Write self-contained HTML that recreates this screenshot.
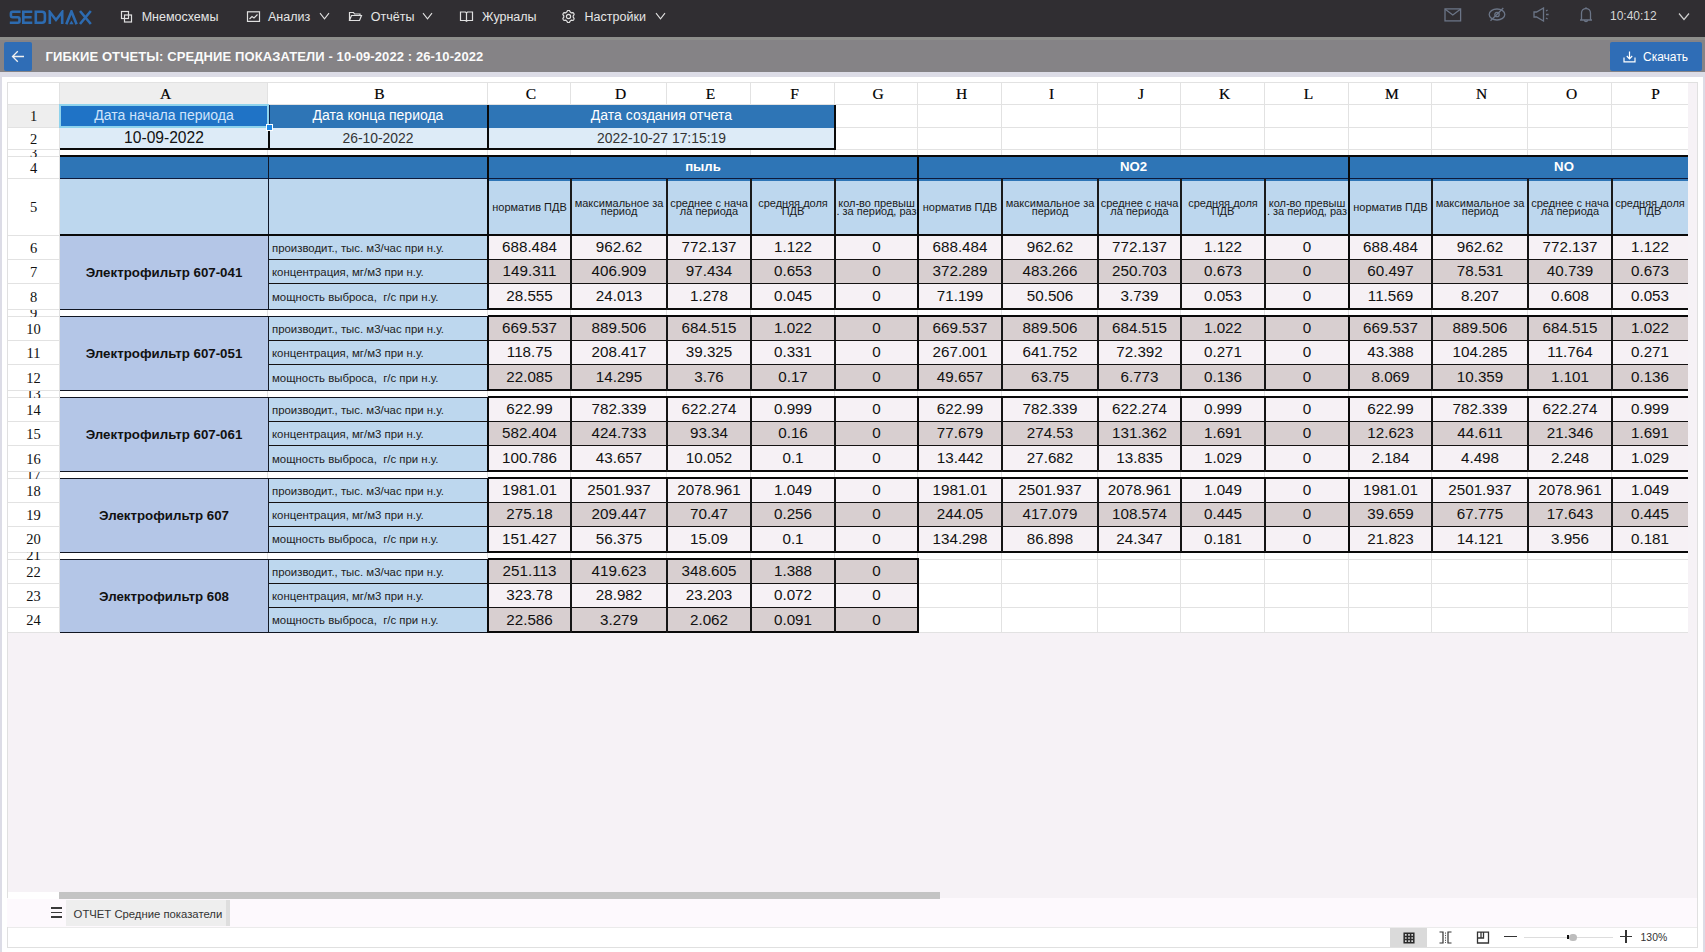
<!DOCTYPE html><html><head><meta charset="utf-8"><style>
*{margin:0;padding:0;box-sizing:border-box}
html,body{width:1705px;height:952px;overflow:hidden}
body{position:relative;background:#dcdce6;font-family:"Liberation Sans",sans-serif}
div{position:absolute}
.sf{font-family:'Liberation Serif',serif}
.t{white-space:nowrap;text-align:center;overflow:visible}
.n{font-size:15.2px;color:#111}
.lbl{font-size:11.4px;color:#222;text-align:left}
.hdc{display:flex;align-items:center;justify-content:center;text-align:center;overflow:hidden;white-space:nowrap}
.hdc span{position:static;font-size:11px;color:#1a1a1a;line-height:8px}
</style></head><body>
<div style="left:0px;top:0px;width:1705px;height:37px;background:#302e32;"></div>
<div style="left:0px;top:37px;width:1705px;height:3px;background:#8d8e8b;"></div>
<div style="left:0px;top:40px;width:1705px;height:32px;background:#858386;"></div>
<div style="left:0px;top:72px;width:1705px;height:5px;background:#dcdce6;"></div>
<div style="left:2px;top:77px;width:1701px;height:875px;background:#ffffff;"></div>
<div style="left:7px;top:82px;width:1691px;height:866px;background:#ffffff;border:1px solid #e0e0e0"></div>
<div style="left:8px;top:633px;width:1689px;height:266px;background:#f6f2f6;"></div>
<div style="left:1688px;top:83px;width:9px;height:550px;background:#f6f2f6;"></div>
<div style="left:8px;top:83px;width:1680px;height:21px;background:#ffffff;"></div>
<div style="left:60px;top:83px;width:208px;height:21px;background:#eeeeee;"></div>
<div style="left:8px;top:104px;width:51px;height:23px;background:#eeeeee;"></div>
<div style="left:59px;top:83px;width:1px;height:550px;background:#e2e2e2;"></div>
<div style="left:267px;top:83px;width:1px;height:550px;background:#e2e2e2;"></div>
<div style="left:487px;top:83px;width:1px;height:550px;background:#e2e2e2;"></div>
<div style="left:570px;top:83px;width:1px;height:550px;background:#e2e2e2;"></div>
<div style="left:666px;top:83px;width:1px;height:550px;background:#e2e2e2;"></div>
<div style="left:750px;top:83px;width:1px;height:550px;background:#e2e2e2;"></div>
<div style="left:834px;top:83px;width:1px;height:550px;background:#e2e2e2;"></div>
<div style="left:917px;top:83px;width:1px;height:550px;background:#e2e2e2;"></div>
<div style="left:1001px;top:83px;width:1px;height:550px;background:#e2e2e2;"></div>
<div style="left:1097px;top:83px;width:1px;height:550px;background:#e2e2e2;"></div>
<div style="left:1180px;top:83px;width:1px;height:550px;background:#e2e2e2;"></div>
<div style="left:1264px;top:83px;width:1px;height:550px;background:#e2e2e2;"></div>
<div style="left:1348px;top:83px;width:1px;height:550px;background:#e2e2e2;"></div>
<div style="left:1431px;top:83px;width:1px;height:550px;background:#e2e2e2;"></div>
<div style="left:1527px;top:83px;width:1px;height:550px;background:#e2e2e2;"></div>
<div style="left:1611px;top:83px;width:1px;height:550px;background:#e2e2e2;"></div>
<div style="left:8px;top:82px;width:1680px;height:1px;background:#e2e2e2;"></div>
<div style="left:8px;top:104px;width:1680px;height:1px;background:#e2e2e2;"></div>
<div style="left:8px;top:127px;width:1680px;height:1px;background:#e2e2e2;"></div>
<div style="left:8px;top:149px;width:1680px;height:1px;background:#e2e2e2;"></div>
<div style="left:8px;top:156px;width:1680px;height:1px;background:#e2e2e2;"></div>
<div style="left:8px;top:178px;width:1680px;height:1px;background:#e2e2e2;"></div>
<div style="left:8px;top:235px;width:1680px;height:1px;background:#e2e2e2;"></div>
<div style="left:8px;top:259px;width:1680px;height:1px;background:#e2e2e2;"></div>
<div style="left:8px;top:283px;width:1680px;height:1px;background:#e2e2e2;"></div>
<div style="left:8px;top:309px;width:1680px;height:1px;background:#e2e2e2;"></div>
<div style="left:8px;top:316px;width:1680px;height:1px;background:#e2e2e2;"></div>
<div style="left:8px;top:340px;width:1680px;height:1px;background:#e2e2e2;"></div>
<div style="left:8px;top:364px;width:1680px;height:1px;background:#e2e2e2;"></div>
<div style="left:8px;top:390px;width:1680px;height:1px;background:#e2e2e2;"></div>
<div style="left:8px;top:397px;width:1680px;height:1px;background:#e2e2e2;"></div>
<div style="left:8px;top:421px;width:1680px;height:1px;background:#e2e2e2;"></div>
<div style="left:8px;top:445px;width:1680px;height:1px;background:#e2e2e2;"></div>
<div style="left:8px;top:471px;width:1680px;height:1px;background:#e2e2e2;"></div>
<div style="left:8px;top:478px;width:1680px;height:1px;background:#e2e2e2;"></div>
<div style="left:8px;top:502px;width:1680px;height:1px;background:#e2e2e2;"></div>
<div style="left:8px;top:526px;width:1680px;height:1px;background:#e2e2e2;"></div>
<div style="left:8px;top:552px;width:1680px;height:1px;background:#e2e2e2;"></div>
<div style="left:8px;top:559px;width:1680px;height:1px;background:#e2e2e2;"></div>
<div style="left:8px;top:583px;width:1680px;height:1px;background:#e2e2e2;"></div>
<div style="left:8px;top:607px;width:1680px;height:1px;background:#e2e2e2;"></div>
<div style="left:8px;top:632px;width:1680px;height:1px;background:#e2e2e2;"></div>
<div class="t sf" style="left:61.5px;top:83px;width:208px;height:21px;line-height:21px;font-size:15.5px;color:#000;-webkit-text-stroke:0.2px #000">A</div>
<div class="t sf" style="left:269.5px;top:83px;width:220px;height:21px;line-height:21px;font-size:15.5px;color:#000;-webkit-text-stroke:0.2px #000">B</div>
<div class="t sf" style="left:489.5px;top:83px;width:83px;height:21px;line-height:21px;font-size:15.5px;color:#000;-webkit-text-stroke:0.2px #000">C</div>
<div class="t sf" style="left:572.5px;top:83px;width:96px;height:21px;line-height:21px;font-size:15.5px;color:#000;-webkit-text-stroke:0.2px #000">D</div>
<div class="t sf" style="left:668.5px;top:83px;width:84px;height:21px;line-height:21px;font-size:15.5px;color:#000;-webkit-text-stroke:0.2px #000">E</div>
<div class="t sf" style="left:752.5px;top:83px;width:84px;height:21px;line-height:21px;font-size:15.5px;color:#000;-webkit-text-stroke:0.2px #000">F</div>
<div class="t sf" style="left:836.5px;top:83px;width:83px;height:21px;line-height:21px;font-size:15.5px;color:#000;-webkit-text-stroke:0.2px #000">G</div>
<div class="t sf" style="left:919.5px;top:83px;width:84px;height:21px;line-height:21px;font-size:15.5px;color:#000;-webkit-text-stroke:0.2px #000">H</div>
<div class="t sf" style="left:1003.5px;top:83px;width:96px;height:21px;line-height:21px;font-size:15.5px;color:#000;-webkit-text-stroke:0.2px #000">I</div>
<div class="t sf" style="left:1099.5px;top:83px;width:83px;height:21px;line-height:21px;font-size:15.5px;color:#000;-webkit-text-stroke:0.2px #000">J</div>
<div class="t sf" style="left:1182.5px;top:83px;width:84px;height:21px;line-height:21px;font-size:15.5px;color:#000;-webkit-text-stroke:0.2px #000">K</div>
<div class="t sf" style="left:1266.5px;top:83px;width:84px;height:21px;line-height:21px;font-size:15.5px;color:#000;-webkit-text-stroke:0.2px #000">L</div>
<div class="t sf" style="left:1350.5px;top:83px;width:83px;height:21px;line-height:21px;font-size:15.5px;color:#000;-webkit-text-stroke:0.2px #000">M</div>
<div class="t sf" style="left:1433.5px;top:83px;width:96px;height:21px;line-height:21px;font-size:15.5px;color:#000;-webkit-text-stroke:0.2px #000">N</div>
<div class="t sf" style="left:1529.5px;top:83px;width:84px;height:21px;line-height:21px;font-size:15.5px;color:#000;-webkit-text-stroke:0.2px #000">O</div>
<div class="t sf" style="left:1613.5px;top:83px;width:84px;height:21px;line-height:21px;font-size:15.5px;color:#000;-webkit-text-stroke:0.2px #000">P</div>
<div class="t sf" style="left:8px;top:104.5px;width:51px;height:23.0px;line-height:23.0px;font-size:14.5px;color:#111;overflow:hidden">1</div>
<div class="t sf" style="left:8px;top:127.5px;width:51px;height:22.0px;line-height:22.0px;font-size:14.5px;color:#111;overflow:hidden">2</div>
<div class="t sf" style="left:8px;top:149.5px;width:51px;height:7.0px;line-height:7.0px;font-size:14.5px;color:#111;overflow:hidden">3</div>
<div class="t sf" style="left:8px;top:156.5px;width:51px;height:22.0px;line-height:22.0px;font-size:14.5px;color:#111;overflow:hidden">4</div>
<div class="t sf" style="left:8px;top:178.5px;width:51px;height:57.0px;line-height:57.0px;font-size:14.5px;color:#111;overflow:hidden">5</div>
<div class="t sf" style="left:8px;top:235.5px;width:51px;height:24.0px;line-height:24.0px;font-size:14.5px;color:#111;overflow:hidden">6</div>
<div class="t sf" style="left:8px;top:259.5px;width:51px;height:24.0px;line-height:24.0px;font-size:14.5px;color:#111;overflow:hidden">7</div>
<div class="t sf" style="left:8px;top:283.5px;width:51px;height:26.0px;line-height:26.0px;font-size:14.5px;color:#111;overflow:hidden">8</div>
<div class="t sf" style="left:8px;top:309.5px;width:51px;height:7.0px;line-height:7.0px;font-size:14.5px;color:#111;overflow:hidden">9</div>
<div class="t sf" style="left:8px;top:316.5px;width:51px;height:24.0px;line-height:24.0px;font-size:14.5px;color:#111;overflow:hidden">10</div>
<div class="t sf" style="left:8px;top:340.5px;width:51px;height:24.0px;line-height:24.0px;font-size:14.5px;color:#111;overflow:hidden">11</div>
<div class="t sf" style="left:8px;top:364.5px;width:51px;height:26.0px;line-height:26.0px;font-size:14.5px;color:#111;overflow:hidden">12</div>
<div class="t sf" style="left:8px;top:390.5px;width:51px;height:7.0px;line-height:7.0px;font-size:14.5px;color:#111;overflow:hidden">13</div>
<div class="t sf" style="left:8px;top:397.5px;width:51px;height:24.0px;line-height:24.0px;font-size:14.5px;color:#111;overflow:hidden">14</div>
<div class="t sf" style="left:8px;top:421.5px;width:51px;height:24.0px;line-height:24.0px;font-size:14.5px;color:#111;overflow:hidden">15</div>
<div class="t sf" style="left:8px;top:445.5px;width:51px;height:26.0px;line-height:26.0px;font-size:14.5px;color:#111;overflow:hidden">16</div>
<div class="t sf" style="left:8px;top:471.5px;width:51px;height:7.0px;line-height:7.0px;font-size:14.5px;color:#111;overflow:hidden">17</div>
<div class="t sf" style="left:8px;top:478.5px;width:51px;height:24.0px;line-height:24.0px;font-size:14.5px;color:#111;overflow:hidden">18</div>
<div class="t sf" style="left:8px;top:502.5px;width:51px;height:24.0px;line-height:24.0px;font-size:14.5px;color:#111;overflow:hidden">19</div>
<div class="t sf" style="left:8px;top:526.5px;width:51px;height:25.5px;line-height:25.5px;font-size:14.5px;color:#111;overflow:hidden">20</div>
<div class="t sf" style="left:8px;top:552px;width:51px;height:7.5px;line-height:7.5px;font-size:14.5px;color:#111;overflow:hidden">21</div>
<div class="t sf" style="left:8px;top:559.5px;width:51px;height:24.0px;line-height:24.0px;font-size:14.5px;color:#111;overflow:hidden">22</div>
<div class="t sf" style="left:8px;top:583.5px;width:51px;height:24.0px;line-height:24.0px;font-size:14.5px;color:#111;overflow:hidden">23</div>
<div class="t sf" style="left:8px;top:607.5px;width:51px;height:25.0px;line-height:25.0px;font-size:14.5px;color:#111;overflow:hidden">24</div>
<svg style="position:absolute;left:9px;top:9.5px;" width="84" height="15" viewBox="0 0 84 15"><path d="M11.6 1.7 H3.6 Q1.9 1.7 1.9 3.4 V5.5 Q1.9 7.2 3.6 7.2 H8.8 Q10.5 7.2 10.5 8.9 V11 Q10.5 12.7 8.8 12.7 H0.8" fill="none" stroke="#2d6bb0" stroke-width="2.6" stroke-linejoin="miter"/><path d="M23.3 1.7 H14.3 V12.7 H23.3 M14.3 7.2 H22.6" fill="none" stroke="#2d6bb0" stroke-width="2.6" stroke-linejoin="miter"/><path d="M26.8 1.7 H33 Q35.9 1.7 35.9 4.6 V9.8 Q35.9 12.7 33 12.7 H26.8 Z" fill="none" stroke="#2d6bb0" stroke-width="2.6" stroke-linejoin="miter"/><path d="M40.8 14 V2 L47 10 L53.2 2 V14" fill="none" stroke="#2d6bb0" stroke-width="2.6" stroke-linejoin="miter"/><path d="M57.3 14.2 L62.45 1.4 L67.6 14.2" fill="none" stroke="#2d6bb0" stroke-width="2.6" stroke-linejoin="miter"/><polygon points="60.3,14.2 62.45,10.6 64.6,14.2" fill="#2d6bb0"/><path d="M71 1 L81.8 14 M81.8 1 L71 14" fill="none" stroke="#2d6bb0" stroke-width="2.6" stroke-linejoin="miter"/></svg>
<div class="t" style="left:141.7px;top:9.98px;text-align:left;font-size:12.5px;line-height:14.37px;color:#e6e6e6">Мнемосхемы</div>
<div class="t" style="left:268px;top:9.98px;text-align:left;font-size:12.5px;line-height:14.37px;color:#e6e6e6">Анализ</div>
<div class="t" style="left:370.8px;top:9.98px;text-align:left;font-size:12.5px;line-height:14.37px;color:#e6e6e6">Отчёты</div>
<div class="t" style="left:482px;top:9.98px;text-align:left;font-size:12.5px;line-height:14.37px;color:#e6e6e6">Журналы</div>
<div class="t" style="left:584.6px;top:9.98px;text-align:left;font-size:12.5px;line-height:14.37px;color:#e6e6e6">Настройки</div>
<svg style="position:absolute;left:120px;top:10px;" width="13" height="13" viewBox="0 0 13 13"><rect x="1.5" y="1.5" width="7" height="7" fill="none" stroke="#e0e0e0" stroke-width="1.2"/><rect x="4.5" y="5" width="7" height="7" fill="none" stroke="#e0e0e0" stroke-width="1.2"/></svg>
<svg style="position:absolute;left:246px;top:10px;" width="15" height="13" viewBox="0 0 15 13"><rect x="1.5" y="1.8" width="12" height="9.6" fill="none" stroke="#e0e0e0" stroke-width="1.2"/><path d="M3.5 9 L6 6.5 L8 8 L11.5 4.5" fill="none" stroke="#e0e0e0" stroke-width="1.2"/></svg>
<svg style="position:absolute;left:348px;top:11px;" width="15" height="11" viewBox="0 0 15 11"><path d="M1.5 9.5 V1.5 H5.5 L6.5 3 H12 V4.5 M1.5 9.5 L3.5 4.5 H13.5 L11.5 9.5 Z" fill="none" stroke="#e0e0e0" stroke-width="1.2"/></svg>
<svg style="position:absolute;left:459px;top:10px;" width="15" height="13" viewBox="0 0 15 13"><path d="M1.5 2 H6.5 L7.5 3 L8.5 2 H13.5 V10.5 H8.5 L7.5 11.3 L6.5 10.5 H1.5 Z M7.5 3 V10.5" fill="none" stroke="#e0e0e0" stroke-width="1.2"/></svg>
<svg style="position:absolute;left:562.2px;top:9.7px;" width="13" height="13" viewBox="0 0 13 13"><polygon points="11.78,9.55 11.34,10.21 10.32,10.32 9.36,10.23 8.85,10.57 8.30,10.84 7.90,11.72 7.30,12.55 6.50,12.60 5.70,12.55 5.10,11.72 4.70,10.84 4.15,10.57 3.64,10.23 2.68,10.32 1.66,10.21 1.22,9.55 0.86,8.83 1.28,7.90 1.84,7.11 1.80,6.50 1.84,5.89 1.28,5.10 0.86,4.17 1.22,3.45 1.66,2.79 2.68,2.68 3.64,2.77 4.15,2.43 4.70,2.16 5.10,1.28 5.70,0.45 6.50,0.40 7.30,0.45 7.90,1.28 8.30,2.16 8.85,2.43 9.36,2.77 10.32,2.68 11.34,2.79 11.78,3.45 12.14,4.17 11.72,5.10 11.16,5.89 11.20,6.50 11.16,7.11 11.72,7.90 12.14,8.83" fill="none" stroke="#e0e0e0" stroke-width="1.2"/><circle cx="6.5" cy="6.5" r="2.1" fill="none" stroke="#e0e0e0" stroke-width="1.2"/></svg>
<svg style="position:absolute;left:319.2px;top:12px;" width="11" height="8" viewBox="0 0 11 8"><path d="M1 1.2 L5.5 6.8 L10 1.2" fill="none" stroke="#e0e0e0" stroke-width="1.1"/></svg>
<svg style="position:absolute;left:422.0px;top:12px;" width="11" height="8" viewBox="0 0 11 8"><path d="M1 1.2 L5.5 6.8 L10 1.2" fill="none" stroke="#e0e0e0" stroke-width="1.1"/></svg>
<svg style="position:absolute;left:655.1px;top:12px;" width="11" height="8" viewBox="0 0 11 8"><path d="M1 1.2 L5.5 6.8 L10 1.2" fill="none" stroke="#e0e0e0" stroke-width="1.1"/></svg>
<svg style="position:absolute;left:1444px;top:8px;" width="18" height="14" viewBox="0 0 18 14"><rect x="1" y="0.9" width="15.6" height="12" fill="none" stroke="#6b7587" stroke-width="1.3"/><path d="M1.2 1.2 L8.8 7 L16.4 1.2" fill="none" stroke="#6b7587" stroke-width="1.3"/></svg>
<svg style="position:absolute;left:1488px;top:7px;" width="18" height="15" viewBox="0 0 18 15"><ellipse cx="9" cy="7.5" rx="7.8" ry="5.5" fill="none" stroke="#6b7587" stroke-width="1.3"/><circle cx="9" cy="7.5" r="2.2" fill="none" stroke="#6b7587" stroke-width="1.3"/><path d="M2.5 13.8 L15.3 1" fill="none" stroke="#6b7587" stroke-width="1.3"/></svg>
<svg style="position:absolute;left:1533px;top:7px;" width="17" height="15" viewBox="0 0 17 15"><path d="M1 5 H3.5 L10.5 1 V14 L3.5 10 H1 Z" fill="none" stroke="#6b7587" stroke-width="1.3"/><path d="M13 4 L14.6 3 M13 7.5 H15.6 M13 11 L14.6 12" fill="none" stroke="#6b7587" stroke-width="1.3"/></svg>
<svg style="position:absolute;left:1579px;top:6px;" width="14" height="17" viewBox="0 0 14 17"><path d="M2.5 14 V7 A4.5 4.5 0 0 1 11.5 7 V14 M1 14 H13 M5.5 14.2 A1.5 1.5 0 0 0 8.5 14.2 M7 1.2 V2.6" fill="none" stroke="#6b7587" stroke-width="1.3"/></svg>
<div class="t" style="left:1610px;top:9.84px;text-align:left;font-size:12px;line-height:13.8px;color:#d6d6d6">10:40:12</div>
<svg style="position:absolute;left:1677.5px;top:12px;" width="12" height="9" viewBox="0 0 12 9"><path d="M1 1.5 L6 7.5 L11 1.5" fill="none" stroke="#d0d0d0" stroke-width="1.2"/></svg>
<div style="left:3.6px;top:42px;width:28px;height:28.6px;background:#2f6db6;border-radius:2px"></div>
<svg style="position:absolute;left:11px;top:50px;" width="14" height="13" viewBox="0 0 14 13"><path d="M13 6.5 H1.8 M6.8 1.2 L1.5 6.5 L6.8 11.8" fill="none" stroke="#f0f0f0" stroke-width="1.3"/></svg>
<div class="t" style="left:45.6px;top:49.52px;text-align:left;font-size:13px;line-height:14.95px;font-weight:bold;color:#fbfbfb;letter-spacing:0.1px">ГИБКИЕ ОТЧЕТЫ: СРЕДНИЕ ПОКАЗАТЕЛИ - 10-09-2022 : 26-10-2022</div>
<div style="left:1609.5px;top:42.3px;width:92.3px;height:28.5px;background:#2f6db6;border-radius:2px"></div>
<svg style="position:absolute;left:1623px;top:51px;" width="13" height="12" viewBox="0 0 13 12"><path d="M6.5 0.5 V7.5 M3.8 5 L6.5 7.8 L9.2 5 M1 6.5 V10.8 H12 V6.5" fill="none" stroke="#ffffff" stroke-width="1.2"/></svg>
<div class="t" style="left:1643px;top:50.94px;text-align:left;font-size:12px;line-height:13.8px;color:#ffffff">Скачать</div>
<div style="left:7px;top:898px;width:1690px;height:29px;background:#fdf9fd;"></div>
<div style="left:8px;top:892px;width:51px;height:7px;background:#ffffff;"></div>
<div style="left:59.3px;top:892px;width:880.7px;height:7px;background:#c4c4c4;"></div>
<div style="left:8px;top:926.5px;width:1689px;height:1.5px;background:#ebebeb;"></div>
<div style="left:66px;top:900px;width:163.7px;height:26px;background:#eeeeee;"></div>
<div style="left:225.5px;top:900px;width:4.2px;height:26px;background:#dedede;"></div>
<div class="t" style="left:73.6px;top:908.39px;text-align:left;font-size:11.3px;line-height:12.99px;color:#333">ОТЧЕТ Средние показатели</div>
<div style="left:50.5px;top:907px;width:11.2px;height:1.6px;background:#3a3a3a"></div><div style="left:50.5px;top:911.7px;width:11.2px;height:1.6px;background:#3a3a3a"></div><div style="left:50.5px;top:916.4px;width:11.2px;height:1.6px;background:#3a3a3a"></div>
<div style="left:1390px;top:927.5px;width:37px;height:19.5px;background:#dadada;"></div>
<svg style="position:absolute;left:1402.5px;top:931.5px;" width="12" height="12" viewBox="0 0 12 12"><path d="M1.2 1.2 H10.8 V10.8 H1.2 Z M1.2 4.4 H10.8 M1.2 7.6 H10.8 M4.4 1.2 V10.8 M7.6 1.2 V10.8" fill="none" stroke="#2a2a2a" stroke-width="1.5"/></svg>
<svg style="position:absolute;left:1439px;top:931px;" width="13" height="13" viewBox="0 0 13 13"><path d="M0.5 1 H4 V12 H0.5 M12.5 1 H9 V12 H12.5" fill="none" stroke="#333" stroke-width="1.2"/><path d="M6.5 1.5 V12" fill="none" stroke="#555" stroke-width="1" stroke-dasharray="1.2 1.2"/></svg>
<svg style="position:absolute;left:1476px;top:931px;" width="14" height="13" viewBox="0 0 14 13"><path d="M1.5 1.2 H12.5 V12 H1.5 Z M1.5 7 H7.5 V1.2 M5 1.2 V7" fill="none" stroke="#333" stroke-width="1.3"/></svg>
<div style="left:1504px;top:935.5px;width:12.7px;height:1.6px;background:#333;"></div>
<div style="left:1524px;top:936.5px;width:89px;height:1px;background:#dddddd;"></div>
<div style="left:1567.2px;top:935px;width:1.6px;height:4px;background:#111;"></div>
<div style="left:1569px;top:933.5px;width:7.5px;height:7.5px;border-radius:50%;background:#bdbdbd"></div>
<div style="left:1619.8px;top:935.5px;width:12.2px;height:1.6px;background:#333;"></div>
<div style="left:1625.1px;top:930px;width:1.6px;height:12.5px;background:#333;"></div>
<div class="t" style="left:1640.6px;top:931.62px;text-align:left;font-size:10.4px;line-height:11.96px;color:#333">130%</div>
<div style="left:60px;top:104.5px;width:208px;height:23.0px;background:#1f73c6;"></div>
<div style="left:268px;top:104.5px;width:220px;height:23.0px;background:#2e75b6;"></div>
<div style="left:488px;top:104.5px;width:347px;height:23.0px;background:#2e75b6;"></div>
<div style="left:60px;top:127.5px;width:775px;height:22.0px;background:#ddebf7;"></div>
<div style="left:60px;top:156.5px;width:1628px;height:22.0px;background:#2e75b6;"></div>
<div style="left:60px;top:178.5px;width:1628px;height:57.0px;background:#bdd7ee;"></div>
<div style="left:60px;top:235.5px;width:208px;height:74.0px;background:#b4c6e7;"></div>
<div style="left:268px;top:235.5px;width:220px;height:74.0px;background:#bdd7ee;"></div>
<div style="left:488px;top:235.5px;width:1200px;height:24.0px;background:#f6f1f5;"></div>
<div style="left:488px;top:259.5px;width:1200px;height:24.0px;background:#d8cfd0;"></div>
<div style="left:488px;top:283.5px;width:1200px;height:26.0px;background:#f6f1f5;"></div>
<div style="left:60px;top:316.5px;width:208px;height:74.0px;background:#b4c6e7;"></div>
<div style="left:268px;top:316.5px;width:220px;height:74.0px;background:#bdd7ee;"></div>
<div style="left:488px;top:316.5px;width:1200px;height:24.0px;background:#d8cfd0;"></div>
<div style="left:488px;top:340.5px;width:1200px;height:24.0px;background:#f6f1f5;"></div>
<div style="left:488px;top:364.5px;width:1200px;height:26.0px;background:#d8cfd0;"></div>
<div style="left:60px;top:397.5px;width:208px;height:74.0px;background:#b4c6e7;"></div>
<div style="left:268px;top:397.5px;width:220px;height:74.0px;background:#bdd7ee;"></div>
<div style="left:488px;top:397.5px;width:1200px;height:24.0px;background:#f6f1f5;"></div>
<div style="left:488px;top:421.5px;width:1200px;height:24.0px;background:#d8cfd0;"></div>
<div style="left:488px;top:445.5px;width:1200px;height:26.0px;background:#f6f1f5;"></div>
<div style="left:60px;top:478.5px;width:208px;height:73.5px;background:#b4c6e7;"></div>
<div style="left:268px;top:478.5px;width:220px;height:73.5px;background:#bdd7ee;"></div>
<div style="left:488px;top:478.5px;width:1200px;height:24.0px;background:#f6f1f5;"></div>
<div style="left:488px;top:502.5px;width:1200px;height:24.0px;background:#d8cfd0;"></div>
<div style="left:488px;top:526.5px;width:1200px;height:25.5px;background:#f6f1f5;"></div>
<div style="left:60px;top:559.5px;width:208px;height:73.0px;background:#b4c6e7;"></div>
<div style="left:268px;top:559.5px;width:220px;height:73.0px;background:#bdd7ee;"></div>
<div style="left:488px;top:559.5px;width:430px;height:24.0px;background:#d8cfd0;"></div>
<div style="left:488px;top:583.5px;width:430px;height:24.0px;background:#f6f1f5;"></div>
<div style="left:488px;top:607.5px;width:430px;height:25.0px;background:#d8cfd0;"></div>
<div style="left:268px;top:127px;width:2px;height:23px;background:#0a0a0a;"></div>
<div style="left:268px;top:104.5px;width:2px;height:22.5px;background:#0d2550;"></div>
<div style="left:487px;top:104.5px;width:2px;height:45.5px;background:#0a0a0a;"></div>
<div style="left:834px;top:104.5px;width:2px;height:45.5px;background:#0a0a0a;"></div>
<div style="left:60px;top:148px;width:776px;height:2px;background:#0a0a0a;"></div>
<div style="left:60px;top:155px;width:1628px;height:2px;background:#0a0a0a;"></div>
<div style="left:60px;top:178px;width:1628px;height:1px;background:#0e1a3a;"></div>
<div style="left:488px;top:179px;width:1200px;height:2px;background:#2e75b6;"></div>
<div style="left:268px;top:157px;width:1px;height:79px;background:#101828;"></div>
<div style="left:487px;top:157px;width:2px;height:79px;background:#0a0a0a;"></div>
<div style="left:917px;top:157px;width:2px;height:79px;background:#0a0a0a;"></div>
<div style="left:1348px;top:157px;width:2px;height:79px;background:#0a0a0a;"></div>
<div style="left:570px;top:179px;width:2px;height:57px;background:#1a1a1a;"></div>
<div style="left:666px;top:179px;width:2px;height:57px;background:#1a1a1a;"></div>
<div style="left:750px;top:179px;width:2px;height:57px;background:#1a1a1a;"></div>
<div style="left:834px;top:179px;width:2px;height:57px;background:#1a1a1a;"></div>
<div style="left:1001px;top:179px;width:2px;height:57px;background:#1a1a1a;"></div>
<div style="left:1097px;top:179px;width:2px;height:57px;background:#1a1a1a;"></div>
<div style="left:1180px;top:179px;width:2px;height:57px;background:#1a1a1a;"></div>
<div style="left:1264px;top:179px;width:2px;height:57px;background:#1a1a1a;"></div>
<div style="left:1431px;top:179px;width:2px;height:57px;background:#1a1a1a;"></div>
<div style="left:1527px;top:179px;width:2px;height:57px;background:#1a1a1a;"></div>
<div style="left:1611px;top:179px;width:2px;height:57px;background:#1a1a1a;"></div>
<div style="left:60px;top:234px;width:1628px;height:2px;background:#0a0a0a;"></div>
<div style="left:488px;top:308px;width:1200px;height:2px;background:#0a0a0a;"></div>
<div style="left:60px;top:309px;width:428px;height:1px;background:#111622;"></div>
<div style="left:268px;top:259px;width:1420px;height:1px;background:#141212;"></div>
<div style="left:268px;top:283px;width:1420px;height:1px;background:#141212;"></div>
<div style="left:268px;top:235.5px;width:1px;height:74.0px;background:#151a26;"></div>
<div style="left:570px;top:235.5px;width:2px;height:74.0px;background:#151515;"></div>
<div style="left:666px;top:235.5px;width:2px;height:74.0px;background:#151515;"></div>
<div style="left:750px;top:235.5px;width:2px;height:74.0px;background:#151515;"></div>
<div style="left:834px;top:235.5px;width:2px;height:74.0px;background:#151515;"></div>
<div style="left:1001px;top:235.5px;width:2px;height:74.0px;background:#151515;"></div>
<div style="left:1097px;top:235.5px;width:2px;height:74.0px;background:#151515;"></div>
<div style="left:1180px;top:235.5px;width:2px;height:74.0px;background:#151515;"></div>
<div style="left:1264px;top:235.5px;width:2px;height:74.0px;background:#151515;"></div>
<div style="left:1431px;top:235.5px;width:2px;height:74.0px;background:#151515;"></div>
<div style="left:1527px;top:235.5px;width:2px;height:74.0px;background:#151515;"></div>
<div style="left:1611px;top:235.5px;width:2px;height:74.0px;background:#151515;"></div>
<div style="left:487px;top:235.5px;width:2px;height:74.0px;background:#0a0a0a;"></div>
<div style="left:917px;top:235.5px;width:2px;height:74.0px;background:#0a0a0a;"></div>
<div style="left:1348px;top:235.5px;width:2px;height:74.0px;background:#0a0a0a;"></div>
<div style="left:488px;top:315px;width:1200px;height:2px;background:#0a0a0a;"></div>
<div style="left:60px;top:316px;width:428px;height:1px;background:#111622;"></div>
<div style="left:488px;top:389px;width:1200px;height:2px;background:#0a0a0a;"></div>
<div style="left:60px;top:390px;width:428px;height:1px;background:#111622;"></div>
<div style="left:268px;top:340px;width:1420px;height:1px;background:#141212;"></div>
<div style="left:268px;top:364px;width:1420px;height:1px;background:#141212;"></div>
<div style="left:268px;top:316.5px;width:1px;height:74.0px;background:#151a26;"></div>
<div style="left:570px;top:316.5px;width:2px;height:74.0px;background:#151515;"></div>
<div style="left:666px;top:316.5px;width:2px;height:74.0px;background:#151515;"></div>
<div style="left:750px;top:316.5px;width:2px;height:74.0px;background:#151515;"></div>
<div style="left:834px;top:316.5px;width:2px;height:74.0px;background:#151515;"></div>
<div style="left:1001px;top:316.5px;width:2px;height:74.0px;background:#151515;"></div>
<div style="left:1097px;top:316.5px;width:2px;height:74.0px;background:#151515;"></div>
<div style="left:1180px;top:316.5px;width:2px;height:74.0px;background:#151515;"></div>
<div style="left:1264px;top:316.5px;width:2px;height:74.0px;background:#151515;"></div>
<div style="left:1431px;top:316.5px;width:2px;height:74.0px;background:#151515;"></div>
<div style="left:1527px;top:316.5px;width:2px;height:74.0px;background:#151515;"></div>
<div style="left:1611px;top:316.5px;width:2px;height:74.0px;background:#151515;"></div>
<div style="left:487px;top:316.5px;width:2px;height:74.0px;background:#0a0a0a;"></div>
<div style="left:917px;top:316.5px;width:2px;height:74.0px;background:#0a0a0a;"></div>
<div style="left:1348px;top:316.5px;width:2px;height:74.0px;background:#0a0a0a;"></div>
<div style="left:488px;top:396px;width:1200px;height:2px;background:#0a0a0a;"></div>
<div style="left:60px;top:397px;width:428px;height:1px;background:#111622;"></div>
<div style="left:488px;top:470px;width:1200px;height:2px;background:#0a0a0a;"></div>
<div style="left:60px;top:471px;width:428px;height:1px;background:#111622;"></div>
<div style="left:268px;top:421px;width:1420px;height:1px;background:#141212;"></div>
<div style="left:268px;top:445px;width:1420px;height:1px;background:#141212;"></div>
<div style="left:268px;top:397.5px;width:1px;height:74.0px;background:#151a26;"></div>
<div style="left:570px;top:397.5px;width:2px;height:74.0px;background:#151515;"></div>
<div style="left:666px;top:397.5px;width:2px;height:74.0px;background:#151515;"></div>
<div style="left:750px;top:397.5px;width:2px;height:74.0px;background:#151515;"></div>
<div style="left:834px;top:397.5px;width:2px;height:74.0px;background:#151515;"></div>
<div style="left:1001px;top:397.5px;width:2px;height:74.0px;background:#151515;"></div>
<div style="left:1097px;top:397.5px;width:2px;height:74.0px;background:#151515;"></div>
<div style="left:1180px;top:397.5px;width:2px;height:74.0px;background:#151515;"></div>
<div style="left:1264px;top:397.5px;width:2px;height:74.0px;background:#151515;"></div>
<div style="left:1431px;top:397.5px;width:2px;height:74.0px;background:#151515;"></div>
<div style="left:1527px;top:397.5px;width:2px;height:74.0px;background:#151515;"></div>
<div style="left:1611px;top:397.5px;width:2px;height:74.0px;background:#151515;"></div>
<div style="left:487px;top:397.5px;width:2px;height:74.0px;background:#0a0a0a;"></div>
<div style="left:917px;top:397.5px;width:2px;height:74.0px;background:#0a0a0a;"></div>
<div style="left:1348px;top:397.5px;width:2px;height:74.0px;background:#0a0a0a;"></div>
<div style="left:488px;top:477px;width:1200px;height:2px;background:#0a0a0a;"></div>
<div style="left:60px;top:478px;width:428px;height:1px;background:#111622;"></div>
<div style="left:488px;top:551px;width:1200px;height:2px;background:#0a0a0a;"></div>
<div style="left:60px;top:552px;width:428px;height:1px;background:#111622;"></div>
<div style="left:268px;top:502px;width:1420px;height:1px;background:#141212;"></div>
<div style="left:268px;top:526px;width:1420px;height:1px;background:#141212;"></div>
<div style="left:268px;top:478.5px;width:1px;height:73.5px;background:#151a26;"></div>
<div style="left:570px;top:478.5px;width:2px;height:73.5px;background:#151515;"></div>
<div style="left:666px;top:478.5px;width:2px;height:73.5px;background:#151515;"></div>
<div style="left:750px;top:478.5px;width:2px;height:73.5px;background:#151515;"></div>
<div style="left:834px;top:478.5px;width:2px;height:73.5px;background:#151515;"></div>
<div style="left:1001px;top:478.5px;width:2px;height:73.5px;background:#151515;"></div>
<div style="left:1097px;top:478.5px;width:2px;height:73.5px;background:#151515;"></div>
<div style="left:1180px;top:478.5px;width:2px;height:73.5px;background:#151515;"></div>
<div style="left:1264px;top:478.5px;width:2px;height:73.5px;background:#151515;"></div>
<div style="left:1431px;top:478.5px;width:2px;height:73.5px;background:#151515;"></div>
<div style="left:1527px;top:478.5px;width:2px;height:73.5px;background:#151515;"></div>
<div style="left:1611px;top:478.5px;width:2px;height:73.5px;background:#151515;"></div>
<div style="left:487px;top:478.5px;width:2px;height:73.5px;background:#0a0a0a;"></div>
<div style="left:917px;top:478.5px;width:2px;height:73.5px;background:#0a0a0a;"></div>
<div style="left:1348px;top:478.5px;width:2px;height:73.5px;background:#0a0a0a;"></div>
<div style="left:488px;top:558px;width:431px;height:2px;background:#0a0a0a;"></div>
<div style="left:60px;top:559px;width:428px;height:1px;background:#111622;"></div>
<div style="left:488px;top:631px;width:431px;height:2px;background:#0a0a0a;"></div>
<div style="left:60px;top:632px;width:428px;height:1px;background:#111622;"></div>
<div style="left:268px;top:583px;width:651px;height:1px;background:#141212;"></div>
<div style="left:268px;top:607px;width:651px;height:1px;background:#141212;"></div>
<div style="left:268px;top:559.5px;width:1px;height:73.0px;background:#151a26;"></div>
<div style="left:570px;top:559.5px;width:2px;height:73.0px;background:#151515;"></div>
<div style="left:666px;top:559.5px;width:2px;height:73.0px;background:#151515;"></div>
<div style="left:750px;top:559.5px;width:2px;height:73.0px;background:#151515;"></div>
<div style="left:834px;top:559.5px;width:2px;height:73.0px;background:#151515;"></div>
<div style="left:487px;top:559.5px;width:2px;height:73.0px;background:#0a0a0a;"></div>
<div style="left:917px;top:559.5px;width:2px;height:73.0px;background:#0a0a0a;"></div>
<div style="left:59px;top:104px;width:210px;height:24px;background:transparent;border:2px solid #8fd3ec"></div>
<div style="left:266px;top:124px;width:7px;height:7px;background:#1e88e5;border:1px solid #fff"></div>
<div class="t" style="left:60px;top:104px;width:208px;height:23px;line-height:23px;font-size:14px;color:#cfe4fb">Дата начала периода</div>
<div class="t" style="left:268px;top:104px;width:220px;height:23px;line-height:23px;font-size:14px;color:#fff">Дата конца периода</div>
<div class="t" style="left:488px;top:104px;width:347px;height:23px;line-height:23px;font-size:14px;color:#fff">Дата создания отчета</div>
<div class="t" style="left:60px;top:126.8px;width:208px;height:22px;line-height:22px;font-size:15.6px;color:#111">10-09-2022</div>
<div class="t" style="left:268px;top:126.8px;width:220px;height:22px;line-height:22px;font-size:13.9px;color:#333">26-10-2022</div>
<div class="t" style="left:488px;top:126.8px;width:347px;height:22px;line-height:22px;font-size:13.9px;color:#333">2022-10-27 17:15:19</div>
<div class="t" style="left:488px;top:155.5px;width:430px;height:22px;line-height:22px;font-size:13.2px;font-weight:bold;color:#fff">пыль</div>
<div class="t" style="left:918px;top:155.5px;width:431px;height:22px;line-height:22px;font-size:13.2px;font-weight:bold;color:#fff">NO2</div>
<div class="t" style="left:1349px;top:155.5px;width:430px;height:22px;line-height:22px;font-size:13.2px;font-weight:bold;color:#fff">NO</div>
<div class="hdc" style="left:488px;top:178.5px;width:83px;height:57px"><span>норматив ПДВ</span></div>
<div class="hdc" style="left:571px;top:178.5px;width:96px;height:57px"><span>максимальное за<br>период</span></div>
<div class="hdc" style="left:667px;top:178.5px;width:84px;height:57px"><span>среднее с нача<br>ла периода</span></div>
<div class="hdc" style="left:751px;top:178.5px;width:84px;height:57px"><span>средняя доля<br>ПДВ</span></div>
<div class="hdc" style="left:835px;top:178.5px;width:83px;height:57px"><span>кол-во превыш<br>. за период, раз</span></div>
<div class="hdc" style="left:918px;top:178.5px;width:84px;height:57px"><span>норматив ПДВ</span></div>
<div class="hdc" style="left:1002px;top:178.5px;width:96px;height:57px"><span>максимальное за<br>период</span></div>
<div class="hdc" style="left:1098px;top:178.5px;width:83px;height:57px"><span>среднее с нача<br>ла периода</span></div>
<div class="hdc" style="left:1181px;top:178.5px;width:84px;height:57px"><span>средняя доля<br>ПДВ</span></div>
<div class="hdc" style="left:1265px;top:178.5px;width:84px;height:57px"><span>кол-во превыш<br>. за период, раз</span></div>
<div class="hdc" style="left:1349px;top:178.5px;width:83px;height:57px"><span>норматив ПДВ</span></div>
<div class="hdc" style="left:1432px;top:178.5px;width:96px;height:57px"><span>максимальное за<br>период</span></div>
<div class="hdc" style="left:1528px;top:178.5px;width:84px;height:57px"><span>среднее с нача<br>ла периода</span></div>
<div class="hdc" style="left:1612px;top:178.5px;width:76px;height:57px"><span>средняя доля<br>ПДВ</span></div>
<div class="t" style="left:60px;top:235.5px;width:208px;height:74.0px;line-height:74.0px;font-size:13.3px;font-weight:bold;color:#111">Электрофильтр 607-041</div>
<div class="t" style="left:272px;top:235.5px;width:215px;height:24.0px;line-height:24.0px;font-size:11.4px;color:#222;text-align:left">производит., тыс. м3/час при н.у.</div>
<div class="t" style="left:488px;top:234.5px;width:83px;height:24.0px;line-height:24.0px;font-size:15.2px;color:#111">688.484</div>
<div class="t" style="left:571px;top:234.5px;width:96px;height:24.0px;line-height:24.0px;font-size:15.2px;color:#111">962.62</div>
<div class="t" style="left:667px;top:234.5px;width:84px;height:24.0px;line-height:24.0px;font-size:15.2px;color:#111">772.137</div>
<div class="t" style="left:751px;top:234.5px;width:84px;height:24.0px;line-height:24.0px;font-size:15.2px;color:#111">1.122</div>
<div class="t" style="left:835px;top:234.5px;width:83px;height:24.0px;line-height:24.0px;font-size:15.2px;color:#111">0</div>
<div class="t" style="left:918px;top:234.5px;width:84px;height:24.0px;line-height:24.0px;font-size:15.2px;color:#111">688.484</div>
<div class="t" style="left:1002px;top:234.5px;width:96px;height:24.0px;line-height:24.0px;font-size:15.2px;color:#111">962.62</div>
<div class="t" style="left:1098px;top:234.5px;width:83px;height:24.0px;line-height:24.0px;font-size:15.2px;color:#111">772.137</div>
<div class="t" style="left:1181px;top:234.5px;width:84px;height:24.0px;line-height:24.0px;font-size:15.2px;color:#111">1.122</div>
<div class="t" style="left:1265px;top:234.5px;width:84px;height:24.0px;line-height:24.0px;font-size:15.2px;color:#111">0</div>
<div class="t" style="left:1349px;top:234.5px;width:83px;height:24.0px;line-height:24.0px;font-size:15.2px;color:#111">688.484</div>
<div class="t" style="left:1432px;top:234.5px;width:96px;height:24.0px;line-height:24.0px;font-size:15.2px;color:#111">962.62</div>
<div class="t" style="left:1528px;top:234.5px;width:84px;height:24.0px;line-height:24.0px;font-size:15.2px;color:#111">772.137</div>
<div class="t" style="left:1612px;top:234.5px;width:76px;height:24.0px;line-height:24.0px;font-size:15.2px;color:#111">1.122</div>
<div class="t" style="left:272px;top:259.5px;width:215px;height:24.0px;line-height:24.0px;font-size:11.4px;color:#222;text-align:left">концентрация, мг/м3 при н.у.</div>
<div class="t" style="left:488px;top:258.5px;width:83px;height:24.0px;line-height:24.0px;font-size:15.2px;color:#111">149.311</div>
<div class="t" style="left:571px;top:258.5px;width:96px;height:24.0px;line-height:24.0px;font-size:15.2px;color:#111">406.909</div>
<div class="t" style="left:667px;top:258.5px;width:84px;height:24.0px;line-height:24.0px;font-size:15.2px;color:#111">97.434</div>
<div class="t" style="left:751px;top:258.5px;width:84px;height:24.0px;line-height:24.0px;font-size:15.2px;color:#111">0.653</div>
<div class="t" style="left:835px;top:258.5px;width:83px;height:24.0px;line-height:24.0px;font-size:15.2px;color:#111">0</div>
<div class="t" style="left:918px;top:258.5px;width:84px;height:24.0px;line-height:24.0px;font-size:15.2px;color:#111">372.289</div>
<div class="t" style="left:1002px;top:258.5px;width:96px;height:24.0px;line-height:24.0px;font-size:15.2px;color:#111">483.266</div>
<div class="t" style="left:1098px;top:258.5px;width:83px;height:24.0px;line-height:24.0px;font-size:15.2px;color:#111">250.703</div>
<div class="t" style="left:1181px;top:258.5px;width:84px;height:24.0px;line-height:24.0px;font-size:15.2px;color:#111">0.673</div>
<div class="t" style="left:1265px;top:258.5px;width:84px;height:24.0px;line-height:24.0px;font-size:15.2px;color:#111">0</div>
<div class="t" style="left:1349px;top:258.5px;width:83px;height:24.0px;line-height:24.0px;font-size:15.2px;color:#111">60.497</div>
<div class="t" style="left:1432px;top:258.5px;width:96px;height:24.0px;line-height:24.0px;font-size:15.2px;color:#111">78.531</div>
<div class="t" style="left:1528px;top:258.5px;width:84px;height:24.0px;line-height:24.0px;font-size:15.2px;color:#111">40.739</div>
<div class="t" style="left:1612px;top:258.5px;width:76px;height:24.0px;line-height:24.0px;font-size:15.2px;color:#111">0.673</div>
<div class="t" style="left:272px;top:283.5px;width:215px;height:26.0px;line-height:26.0px;font-size:11.4px;color:#222;text-align:left">мощность выброса,&nbsp; г/с при н.у.</div>
<div class="t" style="left:488px;top:282.5px;width:83px;height:26.0px;line-height:26.0px;font-size:15.2px;color:#111">28.555</div>
<div class="t" style="left:571px;top:282.5px;width:96px;height:26.0px;line-height:26.0px;font-size:15.2px;color:#111">24.013</div>
<div class="t" style="left:667px;top:282.5px;width:84px;height:26.0px;line-height:26.0px;font-size:15.2px;color:#111">1.278</div>
<div class="t" style="left:751px;top:282.5px;width:84px;height:26.0px;line-height:26.0px;font-size:15.2px;color:#111">0.045</div>
<div class="t" style="left:835px;top:282.5px;width:83px;height:26.0px;line-height:26.0px;font-size:15.2px;color:#111">0</div>
<div class="t" style="left:918px;top:282.5px;width:84px;height:26.0px;line-height:26.0px;font-size:15.2px;color:#111">71.199</div>
<div class="t" style="left:1002px;top:282.5px;width:96px;height:26.0px;line-height:26.0px;font-size:15.2px;color:#111">50.506</div>
<div class="t" style="left:1098px;top:282.5px;width:83px;height:26.0px;line-height:26.0px;font-size:15.2px;color:#111">3.739</div>
<div class="t" style="left:1181px;top:282.5px;width:84px;height:26.0px;line-height:26.0px;font-size:15.2px;color:#111">0.053</div>
<div class="t" style="left:1265px;top:282.5px;width:84px;height:26.0px;line-height:26.0px;font-size:15.2px;color:#111">0</div>
<div class="t" style="left:1349px;top:282.5px;width:83px;height:26.0px;line-height:26.0px;font-size:15.2px;color:#111">11.569</div>
<div class="t" style="left:1432px;top:282.5px;width:96px;height:26.0px;line-height:26.0px;font-size:15.2px;color:#111">8.207</div>
<div class="t" style="left:1528px;top:282.5px;width:84px;height:26.0px;line-height:26.0px;font-size:15.2px;color:#111">0.608</div>
<div class="t" style="left:1612px;top:282.5px;width:76px;height:26.0px;line-height:26.0px;font-size:15.2px;color:#111">0.053</div>
<div class="t" style="left:60px;top:316.5px;width:208px;height:74.0px;line-height:74.0px;font-size:13.3px;font-weight:bold;color:#111">Электрофильтр 607-051</div>
<div class="t" style="left:272px;top:316.5px;width:215px;height:24.0px;line-height:24.0px;font-size:11.4px;color:#222;text-align:left">производит., тыс. м3/час при н.у.</div>
<div class="t" style="left:488px;top:315.5px;width:83px;height:24.0px;line-height:24.0px;font-size:15.2px;color:#111">669.537</div>
<div class="t" style="left:571px;top:315.5px;width:96px;height:24.0px;line-height:24.0px;font-size:15.2px;color:#111">889.506</div>
<div class="t" style="left:667px;top:315.5px;width:84px;height:24.0px;line-height:24.0px;font-size:15.2px;color:#111">684.515</div>
<div class="t" style="left:751px;top:315.5px;width:84px;height:24.0px;line-height:24.0px;font-size:15.2px;color:#111">1.022</div>
<div class="t" style="left:835px;top:315.5px;width:83px;height:24.0px;line-height:24.0px;font-size:15.2px;color:#111">0</div>
<div class="t" style="left:918px;top:315.5px;width:84px;height:24.0px;line-height:24.0px;font-size:15.2px;color:#111">669.537</div>
<div class="t" style="left:1002px;top:315.5px;width:96px;height:24.0px;line-height:24.0px;font-size:15.2px;color:#111">889.506</div>
<div class="t" style="left:1098px;top:315.5px;width:83px;height:24.0px;line-height:24.0px;font-size:15.2px;color:#111">684.515</div>
<div class="t" style="left:1181px;top:315.5px;width:84px;height:24.0px;line-height:24.0px;font-size:15.2px;color:#111">1.022</div>
<div class="t" style="left:1265px;top:315.5px;width:84px;height:24.0px;line-height:24.0px;font-size:15.2px;color:#111">0</div>
<div class="t" style="left:1349px;top:315.5px;width:83px;height:24.0px;line-height:24.0px;font-size:15.2px;color:#111">669.537</div>
<div class="t" style="left:1432px;top:315.5px;width:96px;height:24.0px;line-height:24.0px;font-size:15.2px;color:#111">889.506</div>
<div class="t" style="left:1528px;top:315.5px;width:84px;height:24.0px;line-height:24.0px;font-size:15.2px;color:#111">684.515</div>
<div class="t" style="left:1612px;top:315.5px;width:76px;height:24.0px;line-height:24.0px;font-size:15.2px;color:#111">1.022</div>
<div class="t" style="left:272px;top:340.5px;width:215px;height:24.0px;line-height:24.0px;font-size:11.4px;color:#222;text-align:left">концентрация, мг/м3 при н.у.</div>
<div class="t" style="left:488px;top:339.5px;width:83px;height:24.0px;line-height:24.0px;font-size:15.2px;color:#111">118.75</div>
<div class="t" style="left:571px;top:339.5px;width:96px;height:24.0px;line-height:24.0px;font-size:15.2px;color:#111">208.417</div>
<div class="t" style="left:667px;top:339.5px;width:84px;height:24.0px;line-height:24.0px;font-size:15.2px;color:#111">39.325</div>
<div class="t" style="left:751px;top:339.5px;width:84px;height:24.0px;line-height:24.0px;font-size:15.2px;color:#111">0.331</div>
<div class="t" style="left:835px;top:339.5px;width:83px;height:24.0px;line-height:24.0px;font-size:15.2px;color:#111">0</div>
<div class="t" style="left:918px;top:339.5px;width:84px;height:24.0px;line-height:24.0px;font-size:15.2px;color:#111">267.001</div>
<div class="t" style="left:1002px;top:339.5px;width:96px;height:24.0px;line-height:24.0px;font-size:15.2px;color:#111">641.752</div>
<div class="t" style="left:1098px;top:339.5px;width:83px;height:24.0px;line-height:24.0px;font-size:15.2px;color:#111">72.392</div>
<div class="t" style="left:1181px;top:339.5px;width:84px;height:24.0px;line-height:24.0px;font-size:15.2px;color:#111">0.271</div>
<div class="t" style="left:1265px;top:339.5px;width:84px;height:24.0px;line-height:24.0px;font-size:15.2px;color:#111">0</div>
<div class="t" style="left:1349px;top:339.5px;width:83px;height:24.0px;line-height:24.0px;font-size:15.2px;color:#111">43.388</div>
<div class="t" style="left:1432px;top:339.5px;width:96px;height:24.0px;line-height:24.0px;font-size:15.2px;color:#111">104.285</div>
<div class="t" style="left:1528px;top:339.5px;width:84px;height:24.0px;line-height:24.0px;font-size:15.2px;color:#111">11.764</div>
<div class="t" style="left:1612px;top:339.5px;width:76px;height:24.0px;line-height:24.0px;font-size:15.2px;color:#111">0.271</div>
<div class="t" style="left:272px;top:364.5px;width:215px;height:26.0px;line-height:26.0px;font-size:11.4px;color:#222;text-align:left">мощность выброса,&nbsp; г/с при н.у.</div>
<div class="t" style="left:488px;top:363.5px;width:83px;height:26.0px;line-height:26.0px;font-size:15.2px;color:#111">22.085</div>
<div class="t" style="left:571px;top:363.5px;width:96px;height:26.0px;line-height:26.0px;font-size:15.2px;color:#111">14.295</div>
<div class="t" style="left:667px;top:363.5px;width:84px;height:26.0px;line-height:26.0px;font-size:15.2px;color:#111">3.76</div>
<div class="t" style="left:751px;top:363.5px;width:84px;height:26.0px;line-height:26.0px;font-size:15.2px;color:#111">0.17</div>
<div class="t" style="left:835px;top:363.5px;width:83px;height:26.0px;line-height:26.0px;font-size:15.2px;color:#111">0</div>
<div class="t" style="left:918px;top:363.5px;width:84px;height:26.0px;line-height:26.0px;font-size:15.2px;color:#111">49.657</div>
<div class="t" style="left:1002px;top:363.5px;width:96px;height:26.0px;line-height:26.0px;font-size:15.2px;color:#111">63.75</div>
<div class="t" style="left:1098px;top:363.5px;width:83px;height:26.0px;line-height:26.0px;font-size:15.2px;color:#111">6.773</div>
<div class="t" style="left:1181px;top:363.5px;width:84px;height:26.0px;line-height:26.0px;font-size:15.2px;color:#111">0.136</div>
<div class="t" style="left:1265px;top:363.5px;width:84px;height:26.0px;line-height:26.0px;font-size:15.2px;color:#111">0</div>
<div class="t" style="left:1349px;top:363.5px;width:83px;height:26.0px;line-height:26.0px;font-size:15.2px;color:#111">8.069</div>
<div class="t" style="left:1432px;top:363.5px;width:96px;height:26.0px;line-height:26.0px;font-size:15.2px;color:#111">10.359</div>
<div class="t" style="left:1528px;top:363.5px;width:84px;height:26.0px;line-height:26.0px;font-size:15.2px;color:#111">1.101</div>
<div class="t" style="left:1612px;top:363.5px;width:76px;height:26.0px;line-height:26.0px;font-size:15.2px;color:#111">0.136</div>
<div class="t" style="left:60px;top:397.5px;width:208px;height:74.0px;line-height:74.0px;font-size:13.3px;font-weight:bold;color:#111">Электрофильтр 607-061</div>
<div class="t" style="left:272px;top:397.5px;width:215px;height:24.0px;line-height:24.0px;font-size:11.4px;color:#222;text-align:left">производит., тыс. м3/час при н.у.</div>
<div class="t" style="left:488px;top:396.5px;width:83px;height:24.0px;line-height:24.0px;font-size:15.2px;color:#111">622.99</div>
<div class="t" style="left:571px;top:396.5px;width:96px;height:24.0px;line-height:24.0px;font-size:15.2px;color:#111">782.339</div>
<div class="t" style="left:667px;top:396.5px;width:84px;height:24.0px;line-height:24.0px;font-size:15.2px;color:#111">622.274</div>
<div class="t" style="left:751px;top:396.5px;width:84px;height:24.0px;line-height:24.0px;font-size:15.2px;color:#111">0.999</div>
<div class="t" style="left:835px;top:396.5px;width:83px;height:24.0px;line-height:24.0px;font-size:15.2px;color:#111">0</div>
<div class="t" style="left:918px;top:396.5px;width:84px;height:24.0px;line-height:24.0px;font-size:15.2px;color:#111">622.99</div>
<div class="t" style="left:1002px;top:396.5px;width:96px;height:24.0px;line-height:24.0px;font-size:15.2px;color:#111">782.339</div>
<div class="t" style="left:1098px;top:396.5px;width:83px;height:24.0px;line-height:24.0px;font-size:15.2px;color:#111">622.274</div>
<div class="t" style="left:1181px;top:396.5px;width:84px;height:24.0px;line-height:24.0px;font-size:15.2px;color:#111">0.999</div>
<div class="t" style="left:1265px;top:396.5px;width:84px;height:24.0px;line-height:24.0px;font-size:15.2px;color:#111">0</div>
<div class="t" style="left:1349px;top:396.5px;width:83px;height:24.0px;line-height:24.0px;font-size:15.2px;color:#111">622.99</div>
<div class="t" style="left:1432px;top:396.5px;width:96px;height:24.0px;line-height:24.0px;font-size:15.2px;color:#111">782.339</div>
<div class="t" style="left:1528px;top:396.5px;width:84px;height:24.0px;line-height:24.0px;font-size:15.2px;color:#111">622.274</div>
<div class="t" style="left:1612px;top:396.5px;width:76px;height:24.0px;line-height:24.0px;font-size:15.2px;color:#111">0.999</div>
<div class="t" style="left:272px;top:421.5px;width:215px;height:24.0px;line-height:24.0px;font-size:11.4px;color:#222;text-align:left">концентрация, мг/м3 при н.у.</div>
<div class="t" style="left:488px;top:420.5px;width:83px;height:24.0px;line-height:24.0px;font-size:15.2px;color:#111">582.404</div>
<div class="t" style="left:571px;top:420.5px;width:96px;height:24.0px;line-height:24.0px;font-size:15.2px;color:#111">424.733</div>
<div class="t" style="left:667px;top:420.5px;width:84px;height:24.0px;line-height:24.0px;font-size:15.2px;color:#111">93.34</div>
<div class="t" style="left:751px;top:420.5px;width:84px;height:24.0px;line-height:24.0px;font-size:15.2px;color:#111">0.16</div>
<div class="t" style="left:835px;top:420.5px;width:83px;height:24.0px;line-height:24.0px;font-size:15.2px;color:#111">0</div>
<div class="t" style="left:918px;top:420.5px;width:84px;height:24.0px;line-height:24.0px;font-size:15.2px;color:#111">77.679</div>
<div class="t" style="left:1002px;top:420.5px;width:96px;height:24.0px;line-height:24.0px;font-size:15.2px;color:#111">274.53</div>
<div class="t" style="left:1098px;top:420.5px;width:83px;height:24.0px;line-height:24.0px;font-size:15.2px;color:#111">131.362</div>
<div class="t" style="left:1181px;top:420.5px;width:84px;height:24.0px;line-height:24.0px;font-size:15.2px;color:#111">1.691</div>
<div class="t" style="left:1265px;top:420.5px;width:84px;height:24.0px;line-height:24.0px;font-size:15.2px;color:#111">0</div>
<div class="t" style="left:1349px;top:420.5px;width:83px;height:24.0px;line-height:24.0px;font-size:15.2px;color:#111">12.623</div>
<div class="t" style="left:1432px;top:420.5px;width:96px;height:24.0px;line-height:24.0px;font-size:15.2px;color:#111">44.611</div>
<div class="t" style="left:1528px;top:420.5px;width:84px;height:24.0px;line-height:24.0px;font-size:15.2px;color:#111">21.346</div>
<div class="t" style="left:1612px;top:420.5px;width:76px;height:24.0px;line-height:24.0px;font-size:15.2px;color:#111">1.691</div>
<div class="t" style="left:272px;top:445.5px;width:215px;height:26.0px;line-height:26.0px;font-size:11.4px;color:#222;text-align:left">мощность выброса,&nbsp; г/с при н.у.</div>
<div class="t" style="left:488px;top:444.5px;width:83px;height:26.0px;line-height:26.0px;font-size:15.2px;color:#111">100.786</div>
<div class="t" style="left:571px;top:444.5px;width:96px;height:26.0px;line-height:26.0px;font-size:15.2px;color:#111">43.657</div>
<div class="t" style="left:667px;top:444.5px;width:84px;height:26.0px;line-height:26.0px;font-size:15.2px;color:#111">10.052</div>
<div class="t" style="left:751px;top:444.5px;width:84px;height:26.0px;line-height:26.0px;font-size:15.2px;color:#111">0.1</div>
<div class="t" style="left:835px;top:444.5px;width:83px;height:26.0px;line-height:26.0px;font-size:15.2px;color:#111">0</div>
<div class="t" style="left:918px;top:444.5px;width:84px;height:26.0px;line-height:26.0px;font-size:15.2px;color:#111">13.442</div>
<div class="t" style="left:1002px;top:444.5px;width:96px;height:26.0px;line-height:26.0px;font-size:15.2px;color:#111">27.682</div>
<div class="t" style="left:1098px;top:444.5px;width:83px;height:26.0px;line-height:26.0px;font-size:15.2px;color:#111">13.835</div>
<div class="t" style="left:1181px;top:444.5px;width:84px;height:26.0px;line-height:26.0px;font-size:15.2px;color:#111">1.029</div>
<div class="t" style="left:1265px;top:444.5px;width:84px;height:26.0px;line-height:26.0px;font-size:15.2px;color:#111">0</div>
<div class="t" style="left:1349px;top:444.5px;width:83px;height:26.0px;line-height:26.0px;font-size:15.2px;color:#111">2.184</div>
<div class="t" style="left:1432px;top:444.5px;width:96px;height:26.0px;line-height:26.0px;font-size:15.2px;color:#111">4.498</div>
<div class="t" style="left:1528px;top:444.5px;width:84px;height:26.0px;line-height:26.0px;font-size:15.2px;color:#111">2.248</div>
<div class="t" style="left:1612px;top:444.5px;width:76px;height:26.0px;line-height:26.0px;font-size:15.2px;color:#111">1.029</div>
<div class="t" style="left:60px;top:478.5px;width:208px;height:73.5px;line-height:73.5px;font-size:13.3px;font-weight:bold;color:#111">Электрофильтр 607</div>
<div class="t" style="left:272px;top:478.5px;width:215px;height:24.0px;line-height:24.0px;font-size:11.4px;color:#222;text-align:left">производит., тыс. м3/час при н.у.</div>
<div class="t" style="left:488px;top:477.5px;width:83px;height:24.0px;line-height:24.0px;font-size:15.2px;color:#111">1981.01</div>
<div class="t" style="left:571px;top:477.5px;width:96px;height:24.0px;line-height:24.0px;font-size:15.2px;color:#111">2501.937</div>
<div class="t" style="left:667px;top:477.5px;width:84px;height:24.0px;line-height:24.0px;font-size:15.2px;color:#111">2078.961</div>
<div class="t" style="left:751px;top:477.5px;width:84px;height:24.0px;line-height:24.0px;font-size:15.2px;color:#111">1.049</div>
<div class="t" style="left:835px;top:477.5px;width:83px;height:24.0px;line-height:24.0px;font-size:15.2px;color:#111">0</div>
<div class="t" style="left:918px;top:477.5px;width:84px;height:24.0px;line-height:24.0px;font-size:15.2px;color:#111">1981.01</div>
<div class="t" style="left:1002px;top:477.5px;width:96px;height:24.0px;line-height:24.0px;font-size:15.2px;color:#111">2501.937</div>
<div class="t" style="left:1098px;top:477.5px;width:83px;height:24.0px;line-height:24.0px;font-size:15.2px;color:#111">2078.961</div>
<div class="t" style="left:1181px;top:477.5px;width:84px;height:24.0px;line-height:24.0px;font-size:15.2px;color:#111">1.049</div>
<div class="t" style="left:1265px;top:477.5px;width:84px;height:24.0px;line-height:24.0px;font-size:15.2px;color:#111">0</div>
<div class="t" style="left:1349px;top:477.5px;width:83px;height:24.0px;line-height:24.0px;font-size:15.2px;color:#111">1981.01</div>
<div class="t" style="left:1432px;top:477.5px;width:96px;height:24.0px;line-height:24.0px;font-size:15.2px;color:#111">2501.937</div>
<div class="t" style="left:1528px;top:477.5px;width:84px;height:24.0px;line-height:24.0px;font-size:15.2px;color:#111">2078.961</div>
<div class="t" style="left:1612px;top:477.5px;width:76px;height:24.0px;line-height:24.0px;font-size:15.2px;color:#111">1.049</div>
<div class="t" style="left:272px;top:502.5px;width:215px;height:24.0px;line-height:24.0px;font-size:11.4px;color:#222;text-align:left">концентрация, мг/м3 при н.у.</div>
<div class="t" style="left:488px;top:501.5px;width:83px;height:24.0px;line-height:24.0px;font-size:15.2px;color:#111">275.18</div>
<div class="t" style="left:571px;top:501.5px;width:96px;height:24.0px;line-height:24.0px;font-size:15.2px;color:#111">209.447</div>
<div class="t" style="left:667px;top:501.5px;width:84px;height:24.0px;line-height:24.0px;font-size:15.2px;color:#111">70.47</div>
<div class="t" style="left:751px;top:501.5px;width:84px;height:24.0px;line-height:24.0px;font-size:15.2px;color:#111">0.256</div>
<div class="t" style="left:835px;top:501.5px;width:83px;height:24.0px;line-height:24.0px;font-size:15.2px;color:#111">0</div>
<div class="t" style="left:918px;top:501.5px;width:84px;height:24.0px;line-height:24.0px;font-size:15.2px;color:#111">244.05</div>
<div class="t" style="left:1002px;top:501.5px;width:96px;height:24.0px;line-height:24.0px;font-size:15.2px;color:#111">417.079</div>
<div class="t" style="left:1098px;top:501.5px;width:83px;height:24.0px;line-height:24.0px;font-size:15.2px;color:#111">108.574</div>
<div class="t" style="left:1181px;top:501.5px;width:84px;height:24.0px;line-height:24.0px;font-size:15.2px;color:#111">0.445</div>
<div class="t" style="left:1265px;top:501.5px;width:84px;height:24.0px;line-height:24.0px;font-size:15.2px;color:#111">0</div>
<div class="t" style="left:1349px;top:501.5px;width:83px;height:24.0px;line-height:24.0px;font-size:15.2px;color:#111">39.659</div>
<div class="t" style="left:1432px;top:501.5px;width:96px;height:24.0px;line-height:24.0px;font-size:15.2px;color:#111">67.775</div>
<div class="t" style="left:1528px;top:501.5px;width:84px;height:24.0px;line-height:24.0px;font-size:15.2px;color:#111">17.643</div>
<div class="t" style="left:1612px;top:501.5px;width:76px;height:24.0px;line-height:24.0px;font-size:15.2px;color:#111">0.445</div>
<div class="t" style="left:272px;top:526.5px;width:215px;height:25.5px;line-height:25.5px;font-size:11.4px;color:#222;text-align:left">мощность выброса,&nbsp; г/с при н.у.</div>
<div class="t" style="left:488px;top:525.5px;width:83px;height:25.5px;line-height:25.5px;font-size:15.2px;color:#111">151.427</div>
<div class="t" style="left:571px;top:525.5px;width:96px;height:25.5px;line-height:25.5px;font-size:15.2px;color:#111">56.375</div>
<div class="t" style="left:667px;top:525.5px;width:84px;height:25.5px;line-height:25.5px;font-size:15.2px;color:#111">15.09</div>
<div class="t" style="left:751px;top:525.5px;width:84px;height:25.5px;line-height:25.5px;font-size:15.2px;color:#111">0.1</div>
<div class="t" style="left:835px;top:525.5px;width:83px;height:25.5px;line-height:25.5px;font-size:15.2px;color:#111">0</div>
<div class="t" style="left:918px;top:525.5px;width:84px;height:25.5px;line-height:25.5px;font-size:15.2px;color:#111">134.298</div>
<div class="t" style="left:1002px;top:525.5px;width:96px;height:25.5px;line-height:25.5px;font-size:15.2px;color:#111">86.898</div>
<div class="t" style="left:1098px;top:525.5px;width:83px;height:25.5px;line-height:25.5px;font-size:15.2px;color:#111">24.347</div>
<div class="t" style="left:1181px;top:525.5px;width:84px;height:25.5px;line-height:25.5px;font-size:15.2px;color:#111">0.181</div>
<div class="t" style="left:1265px;top:525.5px;width:84px;height:25.5px;line-height:25.5px;font-size:15.2px;color:#111">0</div>
<div class="t" style="left:1349px;top:525.5px;width:83px;height:25.5px;line-height:25.5px;font-size:15.2px;color:#111">21.823</div>
<div class="t" style="left:1432px;top:525.5px;width:96px;height:25.5px;line-height:25.5px;font-size:15.2px;color:#111">14.121</div>
<div class="t" style="left:1528px;top:525.5px;width:84px;height:25.5px;line-height:25.5px;font-size:15.2px;color:#111">3.956</div>
<div class="t" style="left:1612px;top:525.5px;width:76px;height:25.5px;line-height:25.5px;font-size:15.2px;color:#111">0.181</div>
<div class="t" style="left:60px;top:559.5px;width:208px;height:73.0px;line-height:73.0px;font-size:13.3px;font-weight:bold;color:#111">Электрофильтр 608</div>
<div class="t" style="left:272px;top:559.5px;width:215px;height:24.0px;line-height:24.0px;font-size:11.4px;color:#222;text-align:left">производит., тыс. м3/час при н.у.</div>
<div class="t" style="left:488px;top:558.5px;width:83px;height:24.0px;line-height:24.0px;font-size:15.2px;color:#111">251.113</div>
<div class="t" style="left:571px;top:558.5px;width:96px;height:24.0px;line-height:24.0px;font-size:15.2px;color:#111">419.623</div>
<div class="t" style="left:667px;top:558.5px;width:84px;height:24.0px;line-height:24.0px;font-size:15.2px;color:#111">348.605</div>
<div class="t" style="left:751px;top:558.5px;width:84px;height:24.0px;line-height:24.0px;font-size:15.2px;color:#111">1.388</div>
<div class="t" style="left:835px;top:558.5px;width:83px;height:24.0px;line-height:24.0px;font-size:15.2px;color:#111">0</div>
<div class="t" style="left:272px;top:583.5px;width:215px;height:24.0px;line-height:24.0px;font-size:11.4px;color:#222;text-align:left">концентрация, мг/м3 при н.у.</div>
<div class="t" style="left:488px;top:582.5px;width:83px;height:24.0px;line-height:24.0px;font-size:15.2px;color:#111">323.78</div>
<div class="t" style="left:571px;top:582.5px;width:96px;height:24.0px;line-height:24.0px;font-size:15.2px;color:#111">28.982</div>
<div class="t" style="left:667px;top:582.5px;width:84px;height:24.0px;line-height:24.0px;font-size:15.2px;color:#111">23.203</div>
<div class="t" style="left:751px;top:582.5px;width:84px;height:24.0px;line-height:24.0px;font-size:15.2px;color:#111">0.072</div>
<div class="t" style="left:835px;top:582.5px;width:83px;height:24.0px;line-height:24.0px;font-size:15.2px;color:#111">0</div>
<div class="t" style="left:272px;top:607.5px;width:215px;height:25.0px;line-height:25.0px;font-size:11.4px;color:#222;text-align:left">мощность выброса,&nbsp; г/с при н.у.</div>
<div class="t" style="left:488px;top:606.5px;width:83px;height:25.0px;line-height:25.0px;font-size:15.2px;color:#111">22.586</div>
<div class="t" style="left:571px;top:606.5px;width:96px;height:25.0px;line-height:25.0px;font-size:15.2px;color:#111">3.279</div>
<div class="t" style="left:667px;top:606.5px;width:84px;height:25.0px;line-height:25.0px;font-size:15.2px;color:#111">2.062</div>
<div class="t" style="left:751px;top:606.5px;width:84px;height:25.0px;line-height:25.0px;font-size:15.2px;color:#111">0.091</div>
<div class="t" style="left:835px;top:606.5px;width:83px;height:25.0px;line-height:25.0px;font-size:15.2px;color:#111">0</div>
<!--TABLE-->
</body></html>
